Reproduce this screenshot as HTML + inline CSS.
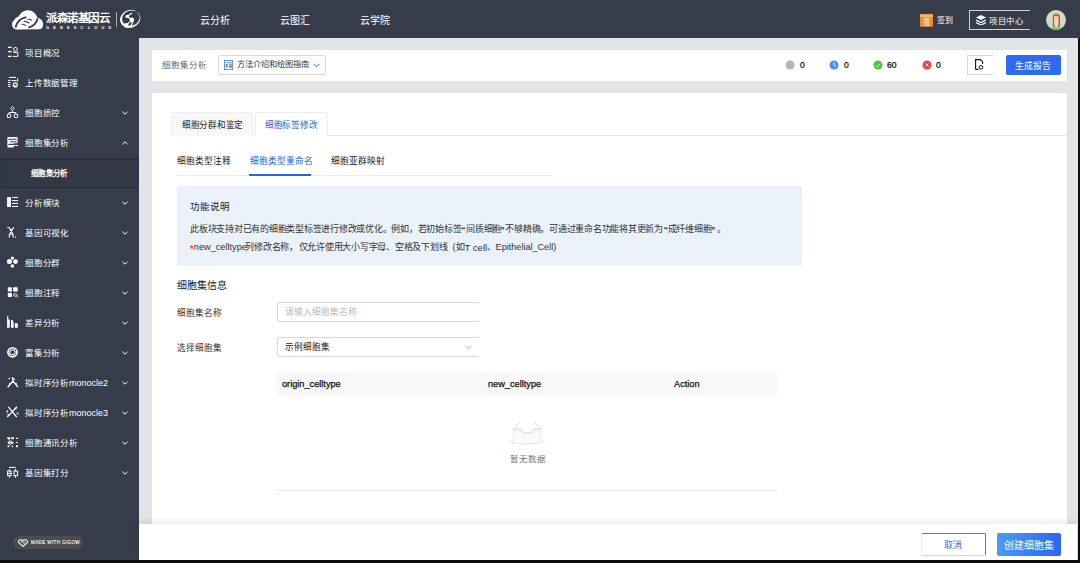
<!DOCTYPE html>
<html lang="zh-CN"><head><meta charset="utf-8">
<style>
*{margin:0;padding:0;box-sizing:border-box}
html,body{width:1080px;height:563px;overflow:hidden;background:#0d0d0f;font-family:"Liberation Sans",sans-serif;}
.a{position:absolute;white-space:nowrap}
#hdr{position:absolute;left:0;top:0;width:1080px;height:38px;background:#363c49}
#side{position:absolute;left:0;top:38px;width:139px;height:522px;background:#363c49}
#main{position:absolute;left:139px;top:38px;width:939px;height:522px;background:#e2e4e8}
.nav{color:#fff;font-size:10px;top:16px;line-height:10px;font-weight:500}
.mi{position:absolute;left:0;width:139px;height:30px;color:#fff;font-size:8.5px;letter-spacing:-0.2px;font-weight:500}
.mi .t{position:absolute;left:25px;top:10px;line-height:10px}
.mi svg.ic{position:absolute;left:6px;top:8px}
.mi svg.ch{position:absolute;left:122px;top:13px}
.sub{position:absolute;left:0;top:120px;width:139px;height:30px;background:#333845;box-shadow:inset 0 1px 1.5px rgba(0,0,0,.35), inset 0 -1px 0 rgba(0,0,0,.18)}
.card{position:absolute;background:#fff}
.g{color:#666}
</style></head>
<body>
<div id="hdr">
  <svg class="a" style="left:8px;top:6px" width="40" height="26" viewBox="0 0 40 26">
    <path d="M5.1 21.7C3.5 19.5 3.8 15.5 6 14.5C7 12.5 9 11 10.6 10.6C12.5 6.5 16 4.2 19.9 4.2C24.5 4.2 28 7.5 29.6 12C33 12.5 35.5 15 35.1 19C34.8 21.5 33.5 23 32.3 23.3L9.2 23.5C7.3 23.5 5.8 22.8 5.1 21.7Z" fill="#fff"/>
    <path d="M7.4 21.4C9 16 13 12 18.5 11.1M29.6 12.5C28.5 17 25 20.5 20.3 21.7" stroke="#363c49" stroke-width="1.9" fill="none"/>
    <path d="M15.8 15.6Q18 15 21.5 17.2M19.5 13.3Q22 13 24 14.6M13.6 18.3Q16 18 18 19.8" stroke="#363c49" stroke-width="1.2" fill="none"/>
  </svg>
  <div class="a" style="left:46px;top:11.5px;color:#fff;font-size:11.5px;font-weight:bold;letter-spacing:-0.5px;line-height:13px">派森诺基因云</div>
  <div class="a" style="left:46px;top:24.5px;color:#fff;font-size:3.9px;letter-spacing:4.2px;line-height:5px;font-weight:bold">GENESCLOUD</div>
  <div class="a" style="left:116px;top:12px;width:1px;height:15px;background:#a9acb2"></div>
  <svg class="a" style="left:119px;top:9px" width="23" height="20" viewBox="0 0 23 20">
    <ellipse cx="11.2" cy="9.9" rx="10.3" ry="8.9" transform="rotate(-20 11.2 9.9)" fill="#fff"/>
    <ellipse cx="11.9" cy="9.2" rx="8.9" ry="7.6" transform="rotate(-20 11.9 9.2)" fill="#363c49"/>
    <path d="M15.5 -1L17.5 3.5L19.5 3L18 -1Z" fill="#363c49"/>
    <path d="M8.2 7.4L12.9 3.9M8.2 7.4L12.9 10.9L7.3 16.4M12.9 10.9C14 14 12.5 16.5 10.5 17.5" stroke="#fff" stroke-width="1.2" fill="none"/>
    <circle cx="8.2" cy="7.4" r="1.7" fill="#fff"/><circle cx="12.9" cy="10.9" r="2.3" fill="#fff"/><circle cx="7.3" cy="16.4" r="2.3" fill="#fff"/>
  </svg>
  <div class="a nav" style="left:200px">云分析</div>
  <div class="a nav" style="left:280px">云图汇</div>
  <div class="a nav" style="left:360px">云学院</div>
  <!-- sign in -->
  <svg class="a" style="left:920px;top:13px" width="13" height="14" viewBox="0 0 13 14">
    <rect x="0" y="1.2" width="13" height="12.6" rx="0.8" fill="#f28a2a"/>
    <path d="M0 2C0 1.5 0.4 1.2 0.8 1.2H12.2C12.6 1.2 13 1.5 13 2V4H0Z" fill="#f6b858"/>
    <path d="M2.1 0.2L2.6 2.5H1.6Z M10.2 0.2L10.7 2.5H9.7Z" fill="#f28a2a"/>
    <text x="6.5" y="11.6" font-size="7.5" fill="#fff" text-anchor="middle" font-family="Liberation Sans" font-weight="500">签</text>
  </svg>
  <div class="a" style="left:937px;top:16px;color:#fff;font-size:8px;line-height:10px;font-weight:500">签到</div>
  <div class="a" style="left:969px;top:10px;width:61px;height:20px;border:1px solid #d0d3d8;border-right:none"></div>
  <svg class="a" style="left:976px;top:15px" width="10" height="10" viewBox="0 0 10 10">
    <path d="M5 0 L10 2.5 L5 5 L0 2.5Z" fill="#fff"/><path d="M0 5 L5 7.5 L10 5" stroke="#fff" fill="none" stroke-width="1.2"/><path d="M0 7.5 L5 10 L10 7.5" stroke="#fff" fill="none" stroke-width="1.2"/>
  </svg>
  <div class="a" style="left:989px;top:15.5px;color:#fff;font-size:8.3px;letter-spacing:0.5px;line-height:10px;font-weight:500">项目中心</div>
  <svg class="a" style="left:1046px;top:10px" width="20" height="20" viewBox="0 0 20 20">
    <defs><clipPath id="cc"><circle cx="10" cy="10" r="10"/></clipPath></defs>
    <circle cx="10" cy="10" r="10" fill="#d2dcca"/>
    <g clip-path="url(#cc)">
    <path d="M6.8 16.8V6.5C6.8 4.5 8.5 3.5 10.3 3.5C12.2 3.5 14 4.5 14 6.5V16.8Z" fill="#b4612c"/>
    <ellipse cx="10.3" cy="3.9" rx="1.7" ry="0.9" fill="#e0a040"/>
    <path d="M8.1 6.3H12.5V14C12.5 16 11.5 17 10.3 17C9.1 17 8.1 16 8.1 14Z" fill="#f6d3b8"/>
    <path d="M5.5 20.5C5.5 18 7.5 17 10.2 17C12.9 17 15 18 15 20.5Z" fill="#f6d3b8"/>
    <path d="M5 17.8H15.5V21H5Z" fill="#5cbf55"/>
    </g>
  </svg>
</div>

<div id="side">
  <div class="mi" style="top:0px"><svg class="ic" width="13" height="13" viewBox="0 0 13 13"><path d="M2 1.4H5.7M2 5.6H5.7M2 10.4H5.7" stroke="#fff" stroke-width="1.1"/><circle cx="9.4" cy="3.3" r="1.9" stroke="#fff" stroke-width="1" fill="none"/><path d="M7 6.3H11.8V10.4H7" stroke="#fff" stroke-width="1" fill="none"/></svg><span class="t">项目概况</span></div>
  <div class="mi" style="top:30px"><svg class="ic" width="13" height="13" viewBox="0 0 13 13"><path d="M3 1.4H10M11.6 2.3V5.8M2 4.4H4.5M2 6.5H4.5M2 8.6H4.5M2 10.4H4.5M5.5 4.6H10.5" stroke="#fff" stroke-width="1" fill="none"/><circle cx="9.3" cy="8.9" r="2" stroke="#fff" stroke-width="1.1" fill="none"/><path d="M8.3 9.2L9.2 9.9L10.3 8.4" stroke="#fff" stroke-width="0.8" fill="none"/></svg><span class="t">上传数据管理</span></div>
  <div class="mi" style="top:60px"><svg class="ic" width="13" height="13" viewBox="0 0 13 13"><path d="M6.4 0.5L8.3 2.4L6.4 4.3L4.5 2.4Z" stroke="#fff" stroke-width="0.9" fill="none"/><path d="M6.4 4.3V6.5M3 8V6.5H9.8V8" stroke="#fff" stroke-width="1" fill="none"/><rect x="1.4" y="8.1" width="3.3" height="3.4" rx="0.6" stroke="#fff" stroke-width="1" fill="none"/><rect x="8.2" y="8.1" width="3.5" height="3.4" rx="0.6" stroke="#fff" stroke-width="1" fill="none"/></svg><span class="t">细胞质控</span><svg class="ch" width="6" height="4" viewBox="0 0 6 4"><path d="M0.5 0.8L3 3.2L5.5 0.8" stroke="#fff" stroke-width="1" fill="none"/></svg></div>
  <div class="mi" style="top:90px"><svg class="ic" width="13" height="13" viewBox="0 0 13 13"><rect x="1.4" y="1" width="10.2" height="10.5" rx="0.8" fill="#fff"/><path d="M2.3 3.3H10.7M4.1 5.8H10.7M2.3 8.4H7.7" stroke="#363c49" stroke-width="1.1"/><path d="M7.8 7.2H12V12H7.8Z" fill="#363c49"/><path d="M8.2 9.5H12" stroke="#fff" stroke-width="1"/></svg><span class="t">细胞集分析</span><svg class="ch" width="6" height="4" viewBox="0 0 6 4"><path d="M0.5 3.2L3 0.8L5.5 3.2" stroke="#fff" stroke-width="1" fill="none"/></svg></div>
  <div class="sub"><span class="a" style="left:31px;top:11px;color:#fff;font-size:7.5px;letter-spacing:0.35px;line-height:10px;font-weight:700">细胞集分析</span></div>
  <div class="mi" style="top:150px"><svg class="ic" width="13" height="13" viewBox="0 0 13 13"><rect x="1.1" y="1" width="3.9" height="10" fill="#fff"/><path d="M6 1.4H12.1M6 4.6H12.1M6 7.4H12.1M6 10.4H12.1" stroke="#fff" stroke-width="1"/></svg><span class="t">分析模块</span><svg class="ch" width="6" height="4" viewBox="0 0 6 4"><path d="M0.5 0.8L3 3.2L5.5 0.8" stroke="#fff" stroke-width="1" fill="none"/></svg></div>
  <div class="mi" style="top:180px"><svg class="ic" width="13" height="13" viewBox="0 0 13 13"><path d="M0.9 1.4H2.9" stroke="#fff" stroke-width="0.8"/><path d="M3 1C3 4 7.5 5 7.3 11.5M7.6 1C7.6 4 3 5 3.2 11.5M4 3.2H6.7M3.8 8.2H6.6" stroke="#fff" stroke-width="1.1" fill="none"/><path d="M8.5 11.6L9.4 10L10.3 11.6Z" fill="#fff"/></svg><span class="t">基因可视化</span><svg class="ch" width="6" height="4" viewBox="0 0 6 4"><path d="M0.5 0.8L3 3.2L5.5 0.8" stroke="#fff" stroke-width="1" fill="none"/></svg></div>
  <div class="mi" style="top:210px"><svg class="ic" width="13" height="13" viewBox="0 0 13 13"><circle cx="6.4" cy="2.1" r="1.6" fill="#fff"/><circle cx="3.4" cy="5.6" r="2.5" fill="#fff"/><circle cx="9.5" cy="5.6" r="2.4" fill="#fff"/><circle cx="6.4" cy="10" r="1.8" fill="#fff"/></svg><span class="t">细胞分群</span><svg class="ch" width="6" height="4" viewBox="0 0 6 4"><path d="M0.5 0.8L3 3.2L5.5 0.8" stroke="#fff" stroke-width="1" fill="none"/></svg></div>
  <div class="mi" style="top:240px"><svg class="ic" width="13" height="13" viewBox="0 0 13 13"><rect x="1.8" y="1.2" width="4.1" height="4.4" rx="0.6" fill="#fff"/><rect x="7.1" y="1.2" width="4.6" height="4.4" rx="0.6" fill="#fff"/><rect x="1.8" y="6.9" width="4.1" height="4.1" fill="#fff"/><path d="M7.3 9C8.3 7.4 10.3 7.4 11.4 9C10.3 10.6 8.3 10.6 7.3 9Z" stroke="#fff" stroke-width="1" fill="none"/><path d="M10.6 10.2L12 11.3" stroke="#fff" stroke-width="0.9"/></svg><span class="t">细胞注释</span><svg class="ch" width="6" height="4" viewBox="0 0 6 4"><path d="M0.5 0.8L3 3.2L5.5 0.8" stroke="#fff" stroke-width="1" fill="none"/></svg></div>
  <div class="mi" style="top:270px"><svg class="ic" width="13" height="13" viewBox="0 0 13 13"><path d="M1.1 0.3H2.3V3.6H3.75V11.7H1.1Z M5 3.9H6.5L7.65 6.5V11.7H5Z M8.9 6.9H10.8L11.9 8.5V11.7H8.9Z" fill="#fff"/></svg><span class="t">差异分析</span><svg class="ch" width="6" height="4" viewBox="0 0 6 4"><path d="M0.5 0.8L3 3.2L5.5 0.8" stroke="#fff" stroke-width="1" fill="none"/></svg></div>
  <div class="mi" style="top:300px"><svg class="ic" width="13" height="13" viewBox="0 0 13 13"><circle cx="6.5" cy="6.3" r="5.4" fill="#fff"/><circle cx="6.5" cy="6.3" r="3.7" fill="#363c49"/><circle cx="6.5" cy="6.3" r="3.1" fill="#fff"/><circle cx="6.5" cy="6.3" r="2" fill="#363c49"/></svg><span class="t">富集分析</span><svg class="ch" width="6" height="4" viewBox="0 0 6 4"><path d="M0.5 0.8L3 3.2L5.5 0.8" stroke="#fff" stroke-width="1" fill="none"/></svg></div>
  <div class="mi" style="top:330px"><svg class="ic" width="13" height="13" viewBox="0 0 13 13"><path d="M6.4 1.2L7 5L11.9 11M7 5L1.6 11.2M6.8 3.2H9M4.5 8.4L3 7.5M9 7.6L10.8 7.6" stroke="#fff" stroke-width="1.3" fill="none"/><circle cx="3.2" cy="2.6" r="0.8" fill="#fff"/></svg><span class="t">拟时序分析<span style="font-size:9px;letter-spacing:0">monocle2</span></span><svg class="ch" width="6" height="4" viewBox="0 0 6 4"><path d="M0.5 0.8L3 3.2L5.5 0.8" stroke="#fff" stroke-width="1" fill="none"/></svg></div>
  <div class="mi" style="top:360px"><svg class="ic" width="13" height="13" viewBox="0 0 13 13"><path d="M2.3 0.8L10.9 11.1M10.9 0.8L1.3 11.1M9 2.8H10.5M3 8.9L1.5 8.5M8.5 8.5L9.5 10" stroke="#fff" stroke-width="1.3" fill="none"/><circle cx="1.3" cy="5.5" r="0.9" fill="#fff"/><circle cx="11.6" cy="7.4" r="0.9" fill="#fff"/></svg><span class="t">拟时序分析<span style="font-size:9px;letter-spacing:0">monocle3</span></span><svg class="ch" width="6" height="4" viewBox="0 0 6 4"><path d="M0.5 0.8L3 3.2L5.5 0.8" stroke="#fff" stroke-width="1" fill="none"/></svg></div>
  <div class="mi" style="top:390px"><svg class="ic" width="13" height="13" viewBox="0 0 13 13"><path d="M1.1 1.2H4.1V3L3 3.6L1.1 2.5Z M5 1.2H8V2.5L6.5 3.6L5 2.5Z" fill="#fff"/><circle cx="3" cy="6.6" r="1.3" fill="#fff"/><circle cx="6.4" cy="6.6" r="1.2" fill="#fff"/><path d="M2.5 3L6.4 6.6L2.3 10.4M3 6.6H6.4" stroke="#fff" stroke-width="0.9" fill="none"/><circle cx="2.3" cy="10.4" r="0.9" fill="#fff"/><circle cx="6.4" cy="10.4" r="0.8" fill="#fff"/><path d="M10 2.4H11.9M10 6.5H11.9" stroke="#fff" stroke-width="1.1"/><rect x="10" y="9.2" width="1.9" height="2" fill="#fff"/></svg><span class="t">细胞通讯分析</span><svg class="ch" width="6" height="4" viewBox="0 0 6 4"><path d="M0.5 0.8L3 3.2L5.5 0.8" stroke="#fff" stroke-width="1" fill="none"/></svg></div>
  <div class="mi" style="top:420px"><svg class="ic" width="13" height="13" viewBox="0 0 13 13"><path d="M3 1.4H9.8M3.4 3.2V11.8M9.4 3.2V11.8" stroke="#fff" stroke-width="1"/><rect x="1.6" y="5.1" width="3.5" height="4.6" fill="#363c49" stroke="#fff" stroke-width="1"/><path d="M1.6 7.4H5.1" stroke="#fff" stroke-width="1"/><rect x="8" y="5.1" width="3.6" height="4.6" fill="#363c49" stroke="#fff" stroke-width="1"/></svg><span class="t">基因集打分</span><svg class="ch" width="6" height="4" viewBox="0 0 6 4"><path d="M0.5 0.8L3 3.2L5.5 0.8" stroke="#fff" stroke-width="1" fill="none"/></svg></div>
  <div class="a" style="left:13px;top:498px;width:70px;height:13px;border-radius:7px;background:#4d4d4f"></div>
  <svg class="a" style="left:17.5px;top:500.5px" width="10" height="8" viewBox="0 0 11 9"><path d="M5.5 8.3L1 4.3C0 3.2 0.6 0.8 2.6 0.8C3.8 0.8 4.9 1.5 5.5 2.2C6.1 1.5 7.2 0.8 8.4 0.8C10.4 0.8 11 3.2 10 4.3Z" fill="none" stroke="#fff" stroke-width="1.2"/><path d="M2.8 3.6L4.6 2.9L6.4 4.8L8.2 3.4" stroke="#fff" stroke-width="1" fill="none"/></svg>
  <div class="a" style="left:31px;top:501.5px;color:#fff;font-size:4.5px;line-height:5px;letter-spacing:0.4px;-webkit-text-stroke:0.1px #fff">MADE WITH GIGOW</div>
</div>

<div id="main">
  <!-- top bar -->
  <div class="card" style="left:13px;top:12px;width:915px;height:31px"></div>
</div>

<!-- top bar content (absolute page coords) -->
<div class="a g" style="left:162px;top:60px;font-size:8.5px;line-height:10px;color:#666">细胞集分析</div>
<div class="a" style="left:218px;top:55px;width:108px;height:20px;border:1px solid #d9d9d9;border-radius:2px;background:#fff"></div>
<svg class="a" style="left:224px;top:60px" width="9" height="10" viewBox="0 0 9 10"><rect x="0.4" y="0.4" width="8.2" height="9.2" fill="#fff" stroke="#3b7cf5" stroke-width="0.8"/><rect x="1.9" y="2" width="5.9" height="0.6" fill="#3b7cf5"/><rect x="1.1" y="3.9" width="0.4" height="3.7" fill="#aaa"/><rect x="2.1" y="3.9" width="1.5" height="3.7" fill="#3b82f6"/><rect x="5" y="3.5" width="3" height="2.2" fill="#f08a2a"/><rect x="5" y="5.9" width="3" height="1.9" fill="#43b54a"/></svg>
<div class="a" style="left:237px;top:60px;font-size:8.2px;line-height:10px;color:#333">方法介绍和绘图指南</div>
<svg class="a" style="left:313px;top:63px" width="7" height="5" viewBox="0 0 7 5"><path d="M0.7 1L3.5 3.8L6.3 1" stroke="#2f6bf0" stroke-width="1" fill="none"/></svg>

<svg class="a" style="left:785px;top:60px" width="10" height="10" viewBox="0 0 10 10"><circle cx="5" cy="5" r="4.5" fill="#b5b5b5"/></svg>
<div class="a" style="left:800px;top:61px;font-size:8.6px;line-height:8px;color:#000;-webkit-text-stroke:0.2px #000">0</div>
<svg class="a" style="left:829px;top:60px" width="10" height="10" viewBox="0 0 10 10"><circle cx="5" cy="5" r="4.5" fill="#4f8ef0"/><path d="M5 2.5V5.2L6.8 6.5" stroke="#fff" stroke-width="0.9" fill="none"/></svg>
<div class="a" style="left:844px;top:61px;font-size:8.6px;line-height:8px;color:#000;-webkit-text-stroke:0.2px #000">0</div>
<svg class="a" style="left:873px;top:60px" width="10" height="10" viewBox="0 0 10 10"><circle cx="5" cy="5" r="4.5" fill="#52c14a"/><path d="M3 5.3L4.5 6.6L7 3.8" stroke="#fff" stroke-width="0.9" fill="none"/></svg>
<div class="a" style="left:887px;top:61px;font-size:8.6px;line-height:8px;color:#000;-webkit-text-stroke:0.2px #000">60</div>
<svg class="a" style="left:922px;top:60px" width="10" height="10" viewBox="0 0 10 10"><circle cx="5" cy="5" r="4.5" fill="#e8464a"/><path d="M3.5 3.5L6.5 6.5M6.5 3.5L3.5 6.5" stroke="#fff" stroke-width="0.9" fill="none"/></svg>
<div class="a" style="left:936px;top:61px;font-size:8.6px;line-height:8px;color:#000;-webkit-text-stroke:0.2px #000">0</div>
<div class="a" style="left:967px;top:55px;width:26px;height:20px;border:1px solid #d9d9d9;border-right:none;background:#fff"></div>
<svg class="a" style="left:975px;top:59px" width="9" height="11" viewBox="0 0 9 11"><path d="M0.6 10.4V0.6H5.5L7.6 2.7V5M0.6 10.4H3.5" stroke="#111" stroke-width="1.1" fill="none"/><circle cx="6" cy="8.3" r="1.8" stroke="#111" stroke-width="1" fill="none"/></svg>
<div class="a" style="left:1006px;top:55px;width:55px;height:20px;border-radius:2px;background:#2f6bf0"></div>
<div class="a" style="left:1015px;top:61px;font-size:8.8px;line-height:10px;color:#fff">生成报告</div>

<!-- main card -->
<div class="a" style="left:152px;top:93px;width:915px;height:431px;background:#fff"></div>
<!-- tabs -->
<div class="a" style="left:171px;top:135px;width:896px;height:1px;background:#e8e8e8"></div>
<div class="a" style="left:171px;top:112px;width:82px;height:24px;background:#f8f8f8;border:1px solid #efefef;border-bottom:none;border-radius:3px 3px 0 0"></div>
<div class="a" style="left:182px;top:120px;font-size:8.6px;letter-spacing:-0.3px;line-height:11px;color:#222">细胞分群和鉴定</div>
<div class="a" style="left:255px;top:112px;width:73px;height:24px;background:#fff;border:1px solid #ececec;border-bottom:none;border-radius:3px 3px 0 0"></div>
<div class="a" style="left:265px;top:120px;font-size:8.6px;letter-spacing:-0.3px;line-height:11px;color:#2560e6">细胞标签修改</div>
<!-- sub tabs -->
<div class="a" style="left:177px;top:175px;width:375px;height:1px;background:#ececec"></div>
<div class="a" style="left:177px;top:156px;font-size:8.7px;line-height:11px;color:#222">细胞类型注释</div>
<div class="a" style="left:250px;top:156px;font-size:8.7px;line-height:11px;color:#2560e6">细胞类型重命名</div>
<div class="a" style="left:249px;top:174px;width:62px;height:2px;background:#2563eb"></div>
<div class="a" style="left:331px;top:156px;font-size:8.7px;line-height:11px;color:#222">细胞亚群映射</div>
<!-- info box -->
<div class="a" style="left:177px;top:186px;width:625px;height:80px;background:#ebf1f9"></div>
<div class="a" style="left:190px;top:201px;font-size:9.5px;line-height:12px;color:#222">功能说明</div>
<div class="a" style="left:0;top:224px;width:1px;height:11px;font-size:9px;letter-spacing:-0.25px;line-height:11px;color:#333"><span class="a" style="left:190px;top:0;">此板块支持对已有的细胞类型标签进行修改或优化。</span><span class="a" style="left:391px;top:0;">例如，</span><span class="a" style="left:417.6px;top:0;">若初始标签</span><span class="a" style="left:461.5px;top:1.5px;letter-spacing:0;font-size:11px;-webkit-text-stroke:0.2px #333">“</span><span class="a" style="left:466px;top:0;">间质细胞</span><span class="a" style="left:500.5px;top:1.5px;letter-spacing:0;font-size:11px;-webkit-text-stroke:0.2px #333">”</span><span class="a" style="left:505.4px;top:0;">不够精确，</span><span class="a" style="left:549.2px;top:0;">可通过重命名功能将其更新为</span><span class="a" style="left:664px;top:1.5px;letter-spacing:0;font-size:11px;-webkit-text-stroke:0.2px #333">“</span><span class="a" style="left:667.6px;top:0;">成纤维细胞</span><span class="a" style="left:711.2px;top:1.5px;letter-spacing:0;font-size:11px;-webkit-text-stroke:0.2px #333">”</span><span class="a" style="left:716.5px;top:0;">。</span></div>
<div class="a" style="left:0;top:242px;width:1px;height:11px;font-size:9px;letter-spacing:-0.25px;line-height:11px;color:#333"><span class="a" style="left:189.8px;top:0;color:#e8302c;font-size:10.5px;line-height:0;top:6.5px;letter-spacing:0">*</span><span class="a" style="left:193.8px;top:0;font-size:9.2px;letter-spacing:0">new_celltype</span><span class="a" style="left:245.4px;top:0;">列修改名称，</span><span class="a" style="left:298.7px;top:0;">仅允许使用大小写字母、</span><span class="a" style="left:394.8px;top:0;">空格及下划线</span><span class="a" style="left:452.5px;top:0;letter-spacing:0">(</span><span class="a" style="left:455.9px;top:0;">如</span><span class="a" style="left:464.4px;top:0;font-size:9.6px;letter-spacing:0">T cell</span><span class="a" style="left:486.5px;top:0;">、</span><span class="a" style="left:495.6px;top:0;font-size:9.1px;letter-spacing:0">Epithelial_Cell)</span></div>
<!-- form -->
<div class="a" style="left:177px;top:280px;font-size:10px;line-height:12px;color:#222;font-weight:500">细胞集信息</div>
<div class="a" style="left:177px;top:308px;font-size:8.6px;line-height:11px;color:#333">细胞集名称</div>
<div class="a" style="left:277px;top:302px;width:202px;height:20px;border:1px solid #d9d9d9;border-right:none;border-radius:3px 0 0 3px"></div>
<div class="a" style="left:285px;top:307px;font-size:8.8px;line-height:11px;color:#bbb">请输入细胞集名称</div>
<div class="a" style="left:177px;top:343px;font-size:8.6px;line-height:11px;color:#333">选择细胞集</div>
<div class="a" style="left:277px;top:337px;width:202px;height:20px;border:1px solid #d9d9d9;border-right:none;border-radius:3px 0 0 3px"></div>
<div class="a" style="left:285px;top:342px;font-size:8.6px;line-height:11px;color:#222">示例细胞集</div>
<svg class="a" style="left:465px;top:345px" width="7" height="5" viewBox="0 0 7 5"><path d="M0.7 1L3.5 3.8L6.3 1" stroke="#aaa" stroke-width="0.9" fill="none"/></svg>
<!-- table -->
<div class="a" style="left:277px;top:372px;width:500px;height:24px;background:#f8f8f8;border-radius:3px 3px 0 0"></div>
<div class="a" style="left:282px;top:379px;font-size:9.2px;line-height:11px;color:#111;-webkit-text-stroke:0.25px #111">origin_celltype</div>
<div class="a" style="left:488px;top:379px;font-size:9.2px;line-height:11px;color:#111;-webkit-text-stroke:0.25px #111">new_celltype</div>
<div class="a" style="left:674px;top:379px;font-size:9.2px;line-height:11px;color:#111;-webkit-text-stroke:0.25px #111">Action</div>
<svg class="a" style="left:507px;top:421px" width="40" height="25" viewBox="0 0 40 25">
  <ellipse cx="20" cy="20.5" rx="19" ry="3.2" fill="#f5f5f5"/>
  <path d="M6.65 8.2H14.1L16.25 11.9H24.8L26.9 8.2H33.8V22.6H6.65Z" fill="#fafafa" stroke="#e3e3e3" stroke-width="0.7"/>
  <path d="M13.05 0.7L6.65 8.2M26.9 0.7L33.8 8.2M6.65 8.2H14.1L16.25 11.9H24.8L26.9 8.2H33.8" fill="none" stroke="#d6d6d6" stroke-width="0.8"/>
</svg>
<div class="a" style="left:510px;top:453.5px;font-size:8.5px;line-height:11px;color:#777">暂无数据</div>
<div class="a" style="left:277px;top:490px;width:500px;height:1px;background:#e8e8e8"></div>

<!-- footer -->
<div class="a" style="left:139px;top:524px;width:938px;height:36px;background:#fff;box-shadow:0 -3px 6px rgba(0,0,0,.08)"></div>
<div class="a" style="left:921px;top:533px;width:65px;height:23px;border:1px solid #3a78f2;border-left-color:#e3ecfd;border-bottom-color:#c5d7fb;border-radius:2px;background:#fff"></div>
<div class="a" style="left:944px;top:540px;font-size:9px;line-height:11px;color:#2f6bf0">取消</div>
<div class="a" style="left:997px;top:533px;width:64px;height:23px;border-radius:2px;background:linear-gradient(90deg,#4c9bf7,#2b66ee)"></div>
<div class="a" style="left:1004px;top:540px;font-size:9.9px;line-height:11px;color:#fff">创建细胞集</div>
</body></html>
